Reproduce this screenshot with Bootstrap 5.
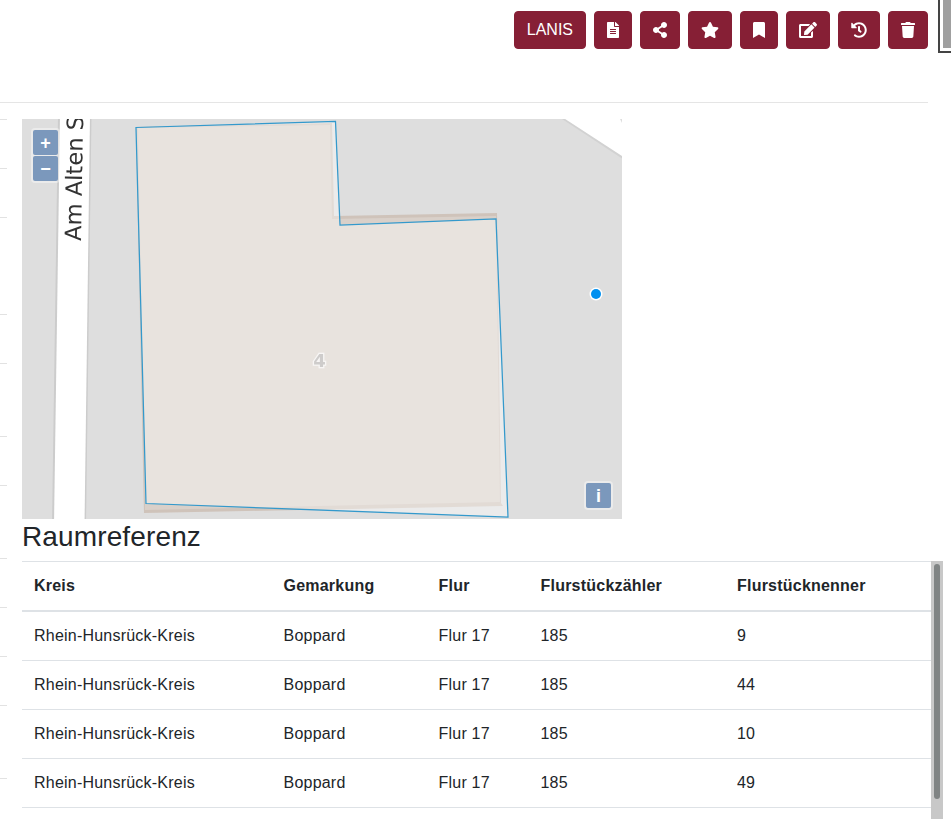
<!DOCTYPE html>
<html lang="de">
<head>
<meta charset="utf-8">
<title>Raumreferenz</title>
<link href="https://cdn.jsdelivr.net/npm/bootstrap@5.3.0/dist/css/bootstrap.min.css" rel="stylesheet">
<style>
html,body{height:100%;overflow:hidden;background:#fff}
body{font-family:"Liberation Sans",Arial,sans-serif;font-size:16px;color:#212529}
.page-head{width:928px;height:103px;padding-top:11px;border-bottom:1px solid #e5e5e5}
.act-btn{height:38px;padding:6px 12px;background:#861f35;border:1px solid #861f35;color:#fff;border-radius:4px;line-height:24px;font-size:16px}
.act-btn:hover{background:#861f35;border-color:#861f35;color:#fff}
.act-btn svg{height:16px;display:block;fill:#fff}
.corner-box{position:absolute;top:-4px;right:-4px;width:17px;height:57px;border:2px solid #444;background:#fff;padding:0 0 3px 3px}
.corner-fill{background:#a0a0a0;height:100%}
.page-body{height:716px}
.tick-rail{width:7px;flex:none;display:block}
.main-col{margin-left:15px;width:921px;min-width:0}
.map-box{width:600px;height:400px;margin-top:16px;position:relative;overflow:hidden;background:#ddd}
.map-box>svg{display:block}
.ol-group{position:absolute;padding:2px;background:rgba(255,255,255,.4);border-radius:4px}
.ol-zoom{top:9px;left:9px;width:29px}
.ol-info{top:362px;left:562px}
.ol-btn{display:block;width:25px;height:25px;padding:0;margin:0;border:0;background:#7b98bc;color:#fff;font:700 18px/22px "Liberation Sans",Arial,sans-serif;text-align:center;border-radius:2px}
.ol-btn+.ol-btn{margin-top:1px}
.sec-title{font-size:28px;line-height:1.2;font-weight:400;letter-spacing:.13px;padding-top:1px;margin:0 0 7px}
.table-row-wrap{flex:1;min-height:0}
.ref-table{width:909px;table-layout:fixed;margin:0;border-collapse:collapse;border-top:1px solid #dee2e6}
.ref-table>:not(:first-child){border-top:0}
.ref-table th,.ref-table td{padding:12px;line-height:24px;font-size:16px;letter-spacing:.22px;border:0;border-bottom:1px solid #dee2e6;color:#212529;background:transparent;box-shadow:none}
.ref-table thead th{border-bottom:2px solid #dee2e6;font-weight:700}
.w-a{width:249.5px}.w-b{width:155px}.w-c{width:102px}.w-d{width:196.5px}.w-e{width:206px}
.fake-track{width:12px;flex:none;background:#c8c8c8;padding:3px}
.fake-thumb{height:235px;background:#808484;border-radius:3px}
</style>
</head>
<body>
<div class="position-relative">
  <div class="page-head d-flex justify-content-end gap-2">
    <button class="btn act-btn">LANIS</button>
    <button class="btn act-btn" aria-label="Dokument"><svg viewBox="0 0 384 512"><path d="M224 136V0H24C10.7 0 0 10.7 0 24v464c0 13.3 10.7 24 24 24h336c13.3 0 24-10.7 24-24V160H248c-13.2 0-24-10.8-24-24zm64 236c0 6.6-5.4 12-12 12H108c-6.6 0-12-5.4-12-12v-8c0-6.6 5.4-12 12-12h168c6.6 0 12 5.4 12 12v8zm0-64c0 6.6-5.4 12-12 12H108c-6.6 0-12-5.4-12-12v-8c0-6.6 5.4-12 12-12h168c6.6 0 12 5.4 12 12v8zm0-72v8c0 6.6-5.4 12-12 12H108c-6.6 0-12-5.4-12-12v-8c0-6.6 5.4-12 12-12h168c6.6 0 12 5.4 12 12zm96-114.1v6.1H256V0h6.1c6.4 0 12.5 2.5 17 7l97.9 98c4.5 4.5 7 10.6 7 16.9z"/></svg></button>
    <button class="btn act-btn" aria-label="Teilen"><svg viewBox="0 0 448 512"><path d="M352 320c-22.608 0-43.387 7.819-59.79 20.895l-102.486-64.054a96.551 96.551 0 0 0 0-41.683l102.486-64.054C308.613 184.181 329.392 192 352 192c53.019 0 96-42.981 96-96S405.019 0 352 0s-96 42.981-96 96c0 7.158.79 14.13 2.276 20.841L155.79 180.895C139.387 167.819 118.608 160 96 160c-53.019 0-96 42.981-96 96s42.981 96 96 96c22.608 0 43.387-7.819 59.79-20.895l102.486 64.054A96.301 96.301 0 0 0 256 416c0 53.019 42.981 96 96 96s96-42.981 96-96-42.981-96-96-96z"/></svg></button>
    <button class="btn act-btn" aria-label="Favorit"><svg viewBox="0 0 576 512"><path d="M259.3 17.8L194 150.2 47.9 171.5c-26.2 3.8-36.7 36.1-17.7 54.6l105.7 103-25 145.5c-4.5 26.3 23.2 46 46.4 33.7L288 439.6l130.7 68.7c23.2 12.2 50.9-7.4 46.4-33.7l-25-145.5 105.7-103c19-18.5 8.5-50.8-17.7-54.6L382 150.2 316.7 17.8c-11.7-23.6-45.6-23.9-57.4 0z"/></svg></button>
    <button class="btn act-btn" aria-label="Merken"><svg viewBox="0 0 384 512"><path d="M0 512V48C0 21.49 21.49 0 48 0h288c26.51 0 48 21.49 48 48v464L192 400 0 512z"/></svg></button>
    <button class="btn act-btn" aria-label="Bearbeiten"><svg viewBox="0 0 576 512"><path d="M402.6 83.2l90.2 90.2c3.8 3.8 3.8 10 0 13.8L274.4 405.6l-92.8 10.3c-12.4 1.4-22.9-9.1-21.5-21.5l10.3-92.8L388.8 83.2c3.8-3.8 10-3.8 13.8 0zm162-22.9l-48.8-48.8c-15.2-15.2-39.9-15.2-55.2 0l-35.4 35.4c-3.8 3.8-3.8 10 0 13.8l90.2 90.2c3.8 3.8 10 3.8 13.8 0l35.4-35.4c15.2-15.3 15.2-40 0-55.2zM384 346.2V448H64V128h229.8c3.2 0 6.2-1.3 8.5-3.5l40-40c7.6-7.6 2.2-20.5-8.5-20.5H48C21.5 64 0 85.5 0 112v352c0 26.5 21.5 48 48 48h352c26.5 0 48-21.5 48-48V306.2c0-10.7-12.9-16-20.5-8.5l-40 40c-2.2 2.3-3.5 5.3-3.5 8.5z"/></svg></button>
    <button class="btn act-btn" aria-label="Historie"><svg viewBox="0 0 512 512"><path d="M504 255.531c.253 136.64-111.18 248.372-247.82 248.468-59.015.042-113.223-20.53-155.822-54.911-11.077-8.94-11.905-25.541-1.839-35.607l11.267-11.267c8.609-8.609 22.353-9.551 31.891-1.984C173.062 425.135 212.781 440 256 440c101.705 0 184-82.311 184-184 0-101.705-82.311-184-184-184-48.814 0-93.149 18.969-126.068 49.932l50.754 50.754c10.08 10.08 2.941 27.314-11.313 27.314H24c-8.837 0-16-7.163-16-16V38.627c0-14.254 17.234-21.393 27.314-11.314l49.372 49.372C129.209 34.136 189.552 8 256 8c136.81 0 247.747 110.78 248 247.531zm-180.912 78.784l9.823-12.63c8.138-10.463 6.253-25.542-4.21-33.679L288 256.349V152c0-13.255-10.745-24-24-24h-16c-13.255 0-24 10.745-24 24v135.651l65.409 50.874c10.463 8.137 25.541 6.253 33.679-4.21z"/></svg></button>
    <button class="btn act-btn" aria-label="Löschen"><svg viewBox="0 0 448 512"><path d="M432 32H312l-9.4-18.7A24 24 0 0 0 281.1 0H166.8a23.72 23.72 0 0 0-21.4 13.3L136 32H16A16 16 0 0 0 0 48v32a16 16 0 0 0 16 16h416a16 16 0 0 0 16-16V48a16 16 0 0 0-16-16zM53.2 467a48 48 0 0 0 47.9 45h245.8a48 48 0 0 0 47.9-45L416 128H32z"/></svg></button>
  </div>
  <div class="corner-box"><div class="corner-fill"></div></div>
</div>
<div class="page-body d-flex">
  <svg class="tick-rail" width="7" height="716" viewBox="0 103 7 716" shape-rendering="crispEdges" stroke="#e2e2e2">
    <path d="M0 119.5H7M0 168.5H7M0 217.5H7M0 314.5H7M0 363.5H7M0 436.5H7M0 485.5H7M0 558.5H7M0 607.5H7M0 656.5H7M0 705.5H7M0 778.5H7"/>
  </svg>
  <div class="main-col d-flex flex-column">
    <div class="map-box">
      <svg width="600" height="400" viewBox="22 119 600 400" xmlns="http://www.w3.org/2000/svg">
        <defs><filter id="soft" x="-5%" y="-5%" width="110%" height="110%"><feGaussianBlur stdDeviation="0.75"/></filter></defs>
        <g filter="url(#soft)">
          <rect x="18" y="115" width="610" height="410" fill="#dedede"/>
          <polygon points="58,115 91.5,115 86,525 52,525" fill="#cccccc"/>
          <polygon points="60,115 90,115 84.5,525 54,525" fill="#ffffff"/>
          <polygon points="556,115 630,115 630,161 622,158.5" fill="#d2d2d2"/>
          <polygon points="559,115 630,115 630,158 622,156" fill="#ffffff"/>
          <polygon points="618,115 630,115 630,124 622,123" fill="#dedede"/>
          <polygon points="136,127 332,123 334,216 497,213 501,503 503,506 144,513" fill="#cfc3ba"/>
          <polygon points="138,128 330,125 332,219 496,216 500,502 145,510" fill="#d9d0c9"/>
          <text x="81" y="241" transform="rotate(-89 81 241)" font-family="'DejaVu Sans',sans-serif" font-size="22.6" fill="#333" stroke="#fff" stroke-width="2.2" paint-order="stroke">Am Alten S</text>
          <text x="319.5" y="367" text-anchor="middle" font-family="'DejaVu Sans',sans-serif" font-size="18" font-weight="700" fill="#aeaba8" stroke="#f3f1ef" stroke-width="2.5" paint-order="stroke">4</text>
        </g>
        <polygon points="136,127.5 335.5,121.5 340,225 496,219 508,517 146,503.5" fill="#fff" fill-opacity=".4" stroke="#3399cc" stroke-width="1.25"/>
        <circle cx="596" cy="294" r="6.5" fill="#fff"/>
        <circle cx="596" cy="294" r="5" fill="#0090f0"/>
      </svg>
      <div class="ol-group ol-zoom">
        <button class="ol-btn">+</button>
        <button class="ol-btn">−</button>
      </div>
      <div class="ol-group ol-info">
        <button class="ol-btn">i</button>
      </div>
    </div>
    <h3 class="sec-title">Raumreferenz</h3>
    <div class="table-row-wrap d-flex overflow-hidden">
      <div>
        <table class="table ref-table">
          <thead>
            <tr><th class="w-a">Kreis</th><th class="w-b">Gemarkung</th><th class="w-c">Flur</th><th class="w-d">Flurstückzähler</th><th class="w-e">Flurstücknenner</th></tr>
          </thead>
          <tbody>
            <tr><td>Rhein-Hunsrück-Kreis</td><td>Boppard</td><td>Flur 17</td><td>185</td><td>9</td></tr>
            <tr><td>Rhein-Hunsrück-Kreis</td><td>Boppard</td><td>Flur 17</td><td>185</td><td>44</td></tr>
            <tr><td>Rhein-Hunsrück-Kreis</td><td>Boppard</td><td>Flur 17</td><td>185</td><td>10</td></tr>
            <tr><td>Rhein-Hunsrück-Kreis</td><td>Boppard</td><td>Flur 17</td><td>185</td><td>49</td></tr>
          </tbody>
        </table>
      </div>
      <div class="fake-track"><div class="fake-thumb"></div></div>
    </div>
  </div>
</div>
<script src="https://cdn.jsdelivr.net/npm/bootstrap@5.3.0/dist/js/bootstrap.bundle.min.js"></script>
</body>
</html>
